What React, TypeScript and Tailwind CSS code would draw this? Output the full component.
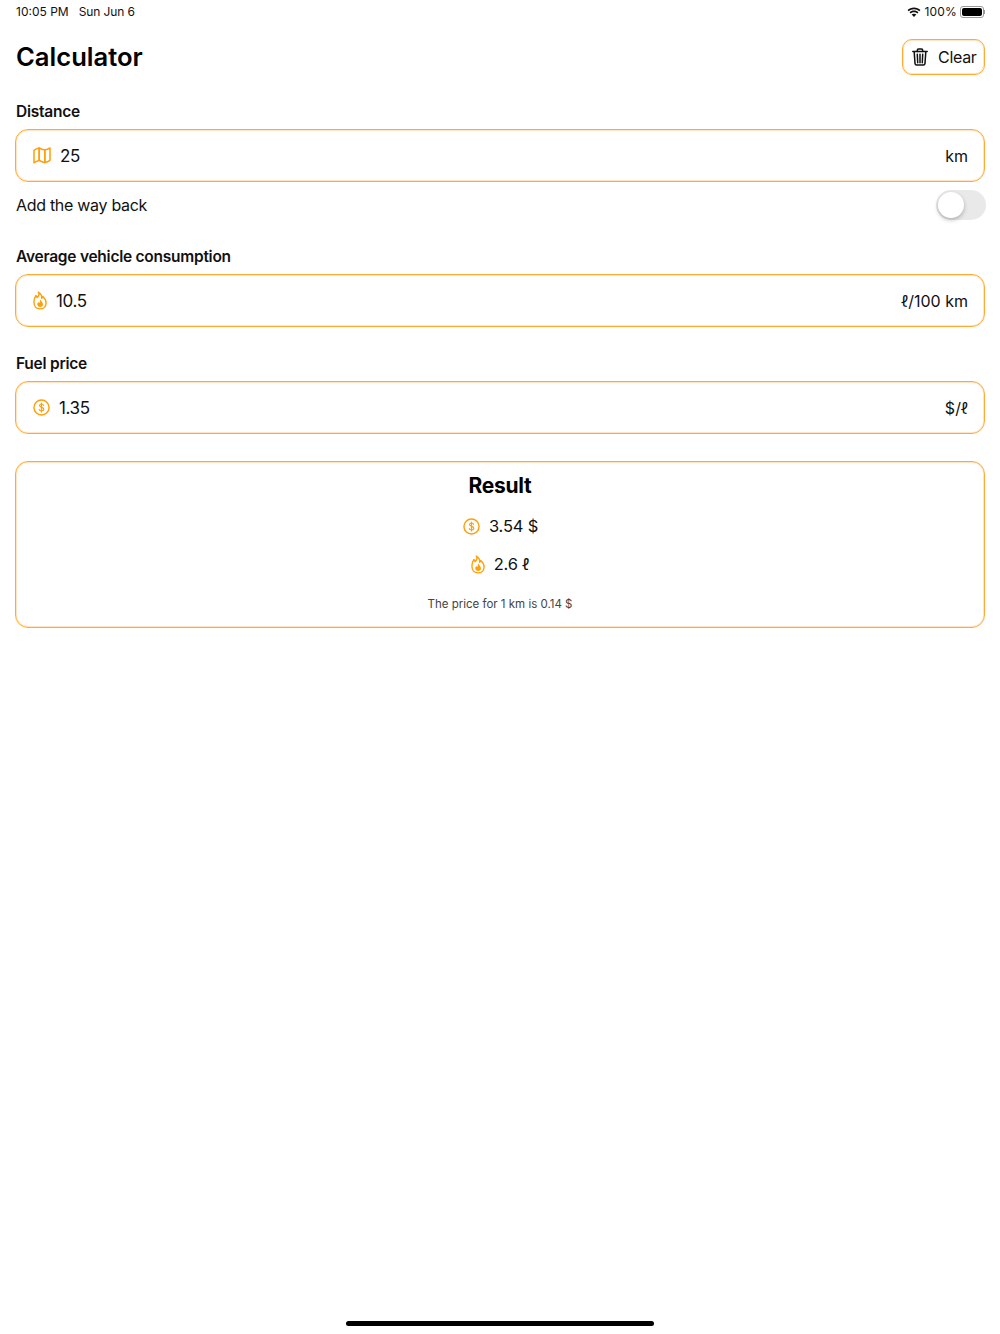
import React from "react";

const Map = ({ className = "" }: { className?: string }) => (
  <svg viewBox="0 0 18 17" className={className} fill="none" stroke="#ff9f0a" strokeWidth="1.5" strokeLinejoin="round">
    <path d="M1 3.4 Q3.2 1.6 6.2 1 L6.2 13.4 Q3.2 14 1 15.8 Z" />
    <path d="M6.2 1 Q9 2.6 11.8 3 L11.8 15.6 Q9 15 6.2 13.4 Z" />
    <path d="M11.8 3 Q14.5 2.6 17 1 L17 13.4 Q14.5 15 11.8 15.6 Z" />
  </svg>
);

const Flame = ({ className = "" }: { className?: string }) => (
  <svg viewBox="0 0 15 20" className={className} fill="none">
    <path d="M5.6 1C7 2.6 6.4 4.8 4.4 6.8 3.8 6 3.4 5.4 3.2 4.6 1.8 6.4 1 8.6 1 11.6 1 16 3.6 19 7.5 19 11.4 19 14 16.2 14 12.6 14 9.4 12 7.2 10.4 5.8 10.2 6.6 9.9 7.2 9.3 7.6 9.6 5 8.2 2.4 5.6 1Z" stroke="#ff9f0a" strokeWidth="1.5" strokeLinejoin="round" />
    <path d="M8 9C8.1 10.7 10.7 11.7 10.7 14.2 10.7 15.9 9.3 16.9 7.7 16.9 6 16.9 4.6 15.8 4.6 14.1 4.6 13 5.2 12.2 5.8 11.6 6.1 12.3 6.4 12.7 6.9 12.8 7.3 11.6 7.2 10.1 8 9Z" fill="#ff9f0a" />
  </svg>
);

const Coin = ({ className = "" }: { className?: string }) => (
  <svg viewBox="0 0 18 18" className={className} fill="none">
    <circle cx="9" cy="9" r="8" stroke="#ff9f0a" strokeWidth="1.5" />
    <path d="M11.2 6.7C11 5.8 10.1 5.3 9 5.3 7.8 5.3 6.9 5.9 6.9 6.9 6.9 9.1 11.4 8 11.4 10.9 11.4 12 10.3 12.7 9 12.7 7.7 12.7 6.8 12.1 6.6 11.1M9 4.2V13.8" stroke="#ff9f0a" strokeWidth="1.2" strokeLinecap="round" />
  </svg>
);

const Trash = () => (
  <svg viewBox="0 0 16 18" className="w-[16px] h-[18px]" fill="none" stroke="#111" strokeWidth="1.5" strokeLinecap="round" strokeLinejoin="round">
    <path d="M.8 3.6H15.2" />
    <path d="M5.3 3.4V2.2Q5.3 1 6.5 1H9.5Q10.7 1 10.7 2.2V3.4" />
    <path d="M2.2 3.8 3 15.4Q3.1 17 4.7 17H11.3Q12.9 17 13 15.4L13.8 3.8" />
    <path d="M5.3 6.3 5.7 14.8M8 6.3V14.8M10.7 6.3 10.3 14.8" />
  </svg>
);

const Field = ({ icon, value, unit, gap }: { icon: React.ReactNode; value: string; unit: string; gap: string }) => (
  <div className="h-[53px] mx-[15px] rounded-[13px] border border-[#ffab33] shadow-[inset_0_0_0_1px_rgba(255,170,60,0.3)] flex items-center pl-[17px] pr-[16px] text-[#111]">
    <span className={`flex items-center ${gap}`}>
      {icon}
      <span className="text-[17px] tracking-[-0.4px] leading-[24px]">{value}</span>
    </span>
    <span className="ml-auto text-[16px] leading-[24px]">{unit}</span>
  </div>
);

const Label = ({ children, className }: { children: React.ReactNode; className: string }) => (
  <div className={`px-4 text-[15.5px] tracking-[-0.25px] leading-[20px] font-semibold text-[#111] ${className}`}>{children}</div>
);

export default function App() {
  return (
    <div
      className="w-[1000px] h-[1334px] bg-white flex flex-col overflow-hidden"
      style={{ fontFamily: 'Inter, "Noto Sans", sans-serif' }}
    >
      <div className="h-[24px] pl-4 pr-[15px] flex items-center justify-between text-[12px] text-[#111]">
        <div className="flex gap-[10px]">
          <span>10:05 PM</span>
          <span className="tracking-[-0.1px]">Sun Jun 6</span>
        </div>
        <div className="flex items-center gap-[3px]">
          <svg viewBox="0 0 16 12" className="w-[14px] h-[11px]" fill="#111">
            <path d="M8 2.2C10.4 2.2 12.5 3.1 14.1 4.6L15.4 3.2C13.5 1.4 10.9.3 8 .3S2.5 1.4.6 3.2L1.9 4.6C3.5 3.1 5.6 2.2 8 2.2Z" />
            <path d="M8 5.6C9.5 5.6 10.8 6.2 11.8 7.1L13.1 5.8C11.8 4.5 10 3.8 8 3.8S4.2 4.5 2.9 5.8L4.2 7.1C5.2 6.2 6.5 5.6 8 5.6Z" />
            <path d="M8 7.3C7 7.3 6 7.7 5.3 8.4L8 11.2 10.7 8.4C10 7.7 9 7.3 8 7.3Z" />
          </svg>
          <span className="tracking-[0.2px]">100%</span>
          <div className="flex items-center">
            <div className="w-[24px] h-[12px] rounded-[3px] border border-[#9a9a9a] p-[1px]">
              <div className="w-full h-full rounded-[2px] bg-black" />
            </div>
            <div className="w-[1px] h-[4px] bg-[#9a9a9a]" />
          </div>
        </div>
      </div>

      <div className="mt-[15px] h-[36px] pl-4 pr-[15px] flex items-center justify-between">
        <h1 className="text-[25.6px] font-semibold text-black pt-[1px]">Calculator</h1>
        <button className="w-[83px] h-[36px] rounded-[10px] border border-[#ffab33] shadow-[inset_0_0_0_1px_rgba(255,170,60,0.3)] flex items-center pl-[9px] gap-[10px] text-[#111]">
          <Trash />
          <span className="text-[16px] tracking-[-0.3px]">Clear</span>
        </button>
      </div>

      <Label className="mt-[27px] mb-[7px]">Distance</Label>
      <Field icon={<Map className="w-[18px] h-[17px]" />} value="25" unit="km" gap="gap-[9px]" />

      <div className="mt-[8px] h-[30px] pl-4 pr-[14px] flex items-center justify-between">
        <span className="text-[16px] tracking-[-0.3px] text-[#111]">Add the way back</span>
        <div className="w-[50px] h-[30px] rounded-full bg-[#e9e9ea] p-[2px]">
          <div className="w-[26px] h-[26px] rounded-full bg-white shadow-[0_2px_4px_rgba(0,0,0,0.25)]" />
        </div>
      </div>

      <Label className="mt-[27px] mb-[7px]">Average vehicle consumption</Label>
      <Field icon={<Flame className="w-[14px] h-[19px]" />} value="10.5" unit="ℓ/100 km" gap="gap-[9px]" />

      <Label className="mt-[27px] mb-[7px]">Fuel price</Label>
      <Field icon={<Coin className="w-[17px] h-[17px]" />} value="1.35" unit="$/ℓ" gap="gap-[9px]" />

      <div className="mt-[27px] h-[167px] mx-[15px] rounded-[13px] border border-[#ffab33] shadow-[inset_0_0_0_1px_rgba(255,170,60,0.3)] flex flex-col items-center text-[#111]">
        <div className="mt-[10px] h-[28px] text-[21px] leading-[28px] font-bold tracking-[-0.3px] text-black">Result</div>
        <div className="mt-[14px] h-[24px] flex items-center gap-[9px] pl-[1px]">
          <Coin className="w-[17px] h-[17px]" />
          <span className="text-[16.5px] tracking-[-0.2px]">3.54 $</span>
        </div>
        <div className="mt-[14px] h-[24px] flex items-center gap-[9px]">
          <Flame className="w-[14px] h-[19px]" />
          <span className="text-[16.5px] tracking-[-0.2px]">2.6 ℓ</span>
        </div>
        <div className="mt-[20px] text-[11.5px] leading-[16px] text-[#444]">The price for 1 km is 0.14 $</div>
      </div>

      <div className="mt-auto mb-[8px] mx-auto w-[308px] h-[5px] rounded-full bg-black" />
    </div>
  );
}
